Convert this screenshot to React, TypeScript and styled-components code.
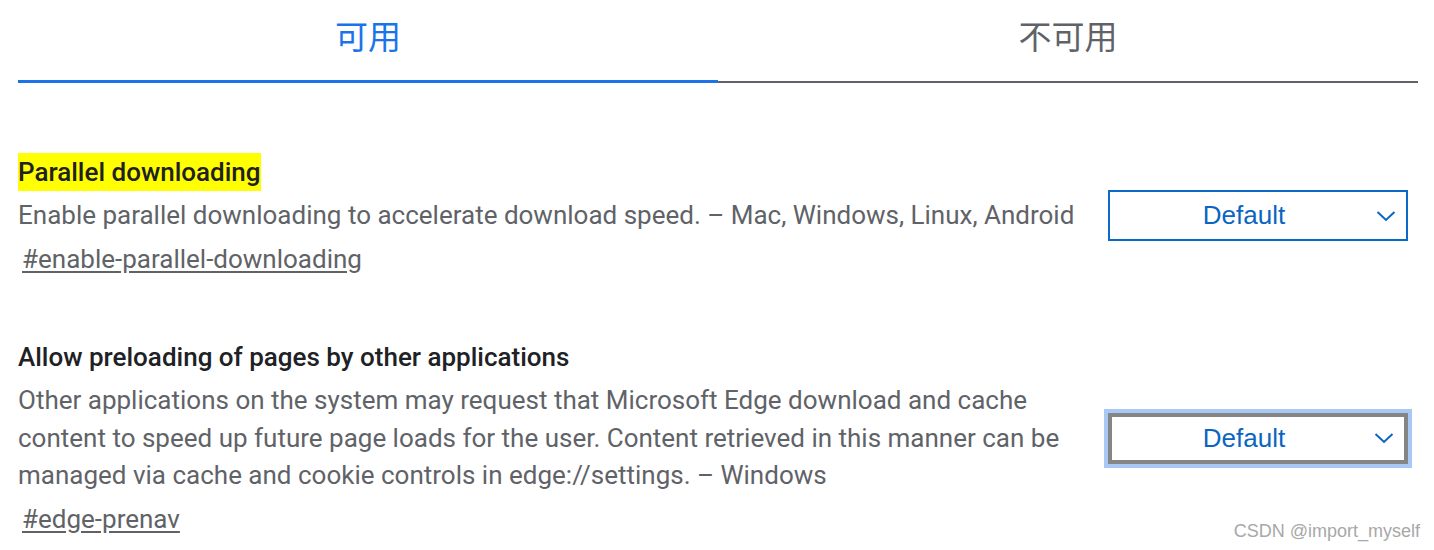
import React from "react";
import styled, { createGlobalStyle } from "styled-components";

const GlobalStyle = createGlobalStyle`
  html, body {
    margin: 0;
    padding: 0;
    background: #ffffff;
  }
  body {
    font-family: Roboto, "Noto Sans", "Noto Sans CJK SC", sans-serif;
    overflow: hidden;
  }
`;

const Page = styled.div`
  position: relative;
  width: 1434px;
  height: 550px;
  box-sizing: border-box;
  padding: 0 16px 0 18px;
`;

const TabBar = styled.div`
  display: flex;
  align-items: flex-end;
  width: 1400px;
`;

const Tab = styled.div<{ $active?: boolean }>`
  flex: 1;
  box-sizing: border-box;
  height: 83px;
  display: flex;
  align-items: center;
  justify-content: center;
  padding-bottom: ${(p) => (p.$active ? "10px" : "11px")};
  font-family: "Noto Sans CJK SC", "Noto Sans", sans-serif;
  font-size: 33px;
  color: ${(p) => (p.$active ? "#1a73e8" : "#5f6368")};
  border-bottom: ${(p) => (p.$active ? "3px solid #1a73e8" : "2px solid #5f6368")};
`;

const List = styled.div`
  display: flex;
  flex-direction: column;
  gap: 60px;
  padding-top: 70px;
`;

const Experiment = styled.div`
  display: flex;
  align-items: center;
  justify-content: space-between;
  width: 1390px;
`;

const TextCol = styled.div`
  width: 1064px;
  display: flex;
  flex-direction: column;
  gap: 6px;
`;

const Title = styled.h2<{ $highlight?: boolean }>`
  margin: 0;
  align-self: flex-start;
  font-family: Roboto, sans-serif;
  font-weight: 500;
  font-size: 26px;
  line-height: 38px;
  color: #202124;
  background: ${(p) => (p.$highlight ? "#ffff00" : "transparent")};
`;

const Description = styled.p`
  margin: 0;
  font-family: Roboto, sans-serif;
  font-size: 26px;
  line-height: 37.5px;
  color: #5f6368;
`;

const Permalink = styled.a`
  align-self: flex-start;
  margin-left: 4px;
  font-family: Roboto, sans-serif;
  font-size: 26px;
  line-height: 37.5px;
  color: #5f6368;
  text-decoration: underline;
  text-underline-offset: 3px;
`;

const SelectBox = styled.div<{ $focused?: boolean }>`
  position: relative;
  box-sizing: border-box;
  width: 300px;
  height: 51px;
  display: flex;
  align-items: center;
  justify-content: center;
  padding-right: 28px;
  border: ${(p) => (p.$focused ? "4px solid #858585" : "2px solid #0a6ac8")};
  box-shadow: ${(p) => (p.$focused ? "0 0 0 4px #a8c8f5" : "none")};
  background: #fff;
  font-family: "Liberation Sans", Arial, sans-serif;
  font-size: 26px;
  color: #0a66c2;
`;

const Chevron = styled.svg`
  position: absolute;
  right: 10px;
  top: 50%;
  margin-top: -6px;
`;

const Watermark = styled.div`
  position: absolute;
  right: 14px;
  bottom: 8px;
  font-family: "Liberation Sans", Arial, sans-serif;
  font-size: 18px;
  color: #a8a8a8;
`;

const Select = ({ focused }: { focused?: boolean }) => (
  <SelectBox $focused={focused}>
    Default
    <Chevron width="20" height="12" viewBox="0 0 20 12">
      <polyline points="1.5,2 10,10 18.5,2" fill="none" stroke="#0a66c2" strokeWidth="2" />
    </Chevron>
  </SelectBox>
);

export default function App() {
  return (
    <Page>
      <GlobalStyle />
      <TabBar>
        <Tab $active>可用</Tab>
        <Tab>不可用</Tab>
      </TabBar>
      <List>
        <Experiment>
          <TextCol>
            <Title $highlight>Parallel downloading</Title>
            <Description>
              Enable parallel downloading to accelerate download speed. – Mac, Windows, Linux, Android
            </Description>
            <Permalink href="#enable-parallel-downloading">#enable-parallel-downloading</Permalink>
          </TextCol>
          <Select />
        </Experiment>
        <Experiment>
          <TextCol>
            <Title>Allow preloading of pages by other applications</Title>
            <Description>
              Other applications on the system may request that Microsoft Edge download and cache content to speed up
              future page loads for the user. Content retrieved in this manner can be managed via cache and cookie
              controls in edge://settings. – Windows
            </Description>
            <Permalink href="#edge-prenav">#edge-prenav</Permalink>
          </TextCol>
          <Select focused />
        </Experiment>
      </List>
      <Watermark>CSDN @import_myself</Watermark>
    </Page>
  );
}
